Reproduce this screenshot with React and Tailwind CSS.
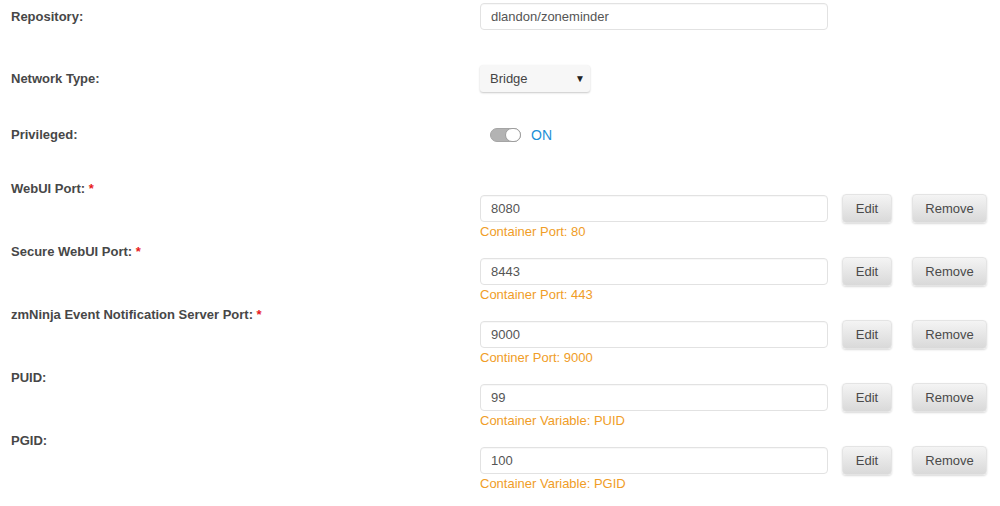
import React from "react";

const font = { fontFamily: '"Liberation Sans", Arial, sans-serif' };

function Label({ children, req }) {
  return (
    <div className="w-[480px] shrink-0 pl-[11px] text-[13px] leading-[16px] font-bold text-[#474747]">
      {children}
      {req && <span className="text-[#e8191c]"> *</span>}
    </div>
  );
}

function TextInput({ value }) {
  return (
    <div className="w-[348px] h-[27px] flex items-center pl-[10px] border border-[#e2e2e2] rounded-[4px] bg-white text-[13px] text-[#555] shadow-[inset_0_1px_1px_rgba(0,0,0,0.03)]">
      {value}
    </div>
  );
}

function Btn({ children, w }) {
  return (
    <div
      className={`${w} h-[29px] flex items-center justify-center rounded-[4px] text-[13px] text-[#4a4a4a] bg-gradient-to-b from-[#f4f4f4] to-[#d9d9d9] border border-[#e4e4e4] shadow-[0_1px_2px_rgba(0,0,0,0.15)]`}
    >
      {children}
    </div>
  );
}

function PortRow({ label, req, value, hint, first }) {
  return (
    <div className={`flex ${first ? "mt-[39px]" : ""} h-[63px]`}>
      <Label req={req}>{label}</Label>
      <div className="pt-[13px]">
        <div className="flex items-center">
          <TextInput value={value} />
          <div className="ml-[14px]">
            <Btn w="w-[50px]">Edit</Btn>
          </div>
          <div className="ml-[20px]">
            <Btn w="w-[75px]">Remove</Btn>
          </div>
        </div>
        <div className="text-[13px] leading-[16px] text-[#f09d27] mt-[1px]">{hint}</div>
      </div>
    </div>
  );
}

export default function App() {
  return (
    <div style={font} className="w-[1000px] h-[506px] bg-white pt-[3px] overflow-hidden">
      <div className="flex items-center h-[27px]">
        <Label>Repository:</Label>
        <TextInput value="dlandon/zoneminder" />
      </div>
      <div className="flex items-center h-[27px] mt-[35px]">
        <Label>Network Type:</Label>
        <div className="w-[110px] h-[27px] flex items-center justify-between pl-[10px] pr-[5px] bg-[#f7f7f7] rounded-[3px] shadow-[0_1px_2px_rgba(0,0,0,0.22)] text-[13px] text-[#444]">
          <span>Bridge</span>
          <span className="text-[10px] text-[#222]">▼</span>
        </div>
      </div>
      <div className="flex items-center h-[14px] mt-[36px]">
        <Label>Privileged:</Label>
        <div className="flex items-center pl-[10px]">
          <div className="relative w-[31px] h-[14px] rounded-full bg-[#b3b3b3] border border-[#a5a5a5]">
            <div className="absolute right-[-1px] top-[-1px] w-[16px] h-[14px] rounded-full bg-white border border-[#9d9d9d]" />
          </div>
          <span className="ml-[10px] text-[14px] text-[#1c8fd8]">ON</span>
        </div>
      </div>
      <PortRow first label="WebUI Port:" req value="8080" hint="Container Port: 80" />
      <PortRow label="Secure WebUI Port:" req value="8443" hint="Container Port: 443" />
      <PortRow label="zmNinja Event Notification Server Port:" req value="9000" hint="Continer Port: 9000" />
      <PortRow label="PUID:" value="99" hint="Container Variable: PUID" />
      <PortRow label="PGID:" value="100" hint="Container Variable: PGID" />
    </div>
  );
}
